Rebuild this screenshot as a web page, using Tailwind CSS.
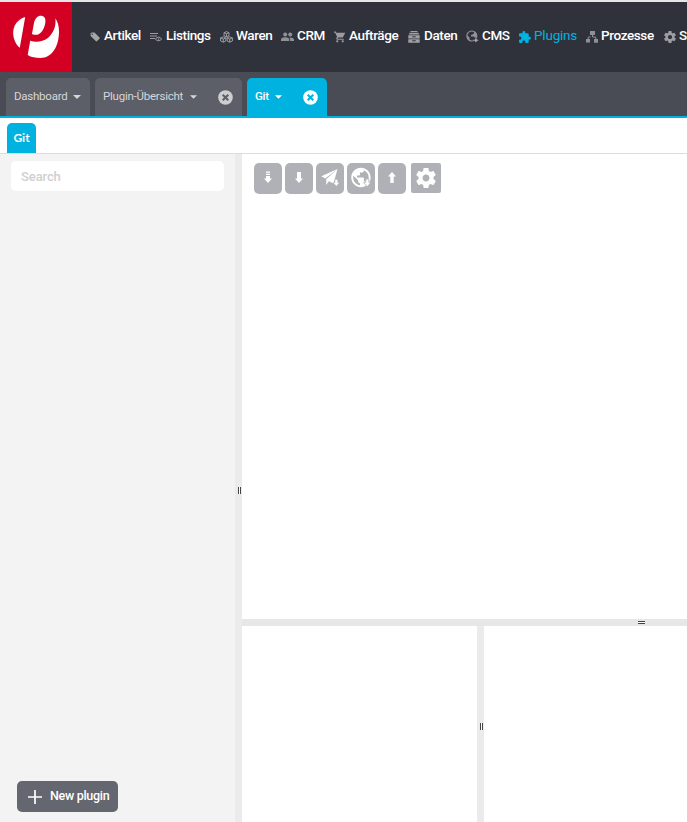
<!DOCTYPE html>
<html lang="de">
<head>
<meta charset="utf-8">
<title>Git</title>
<script src="https://cdn.jsdelivr.net/npm/@tailwindcss/browser@4"></script>
</head>
<body class="w-[687px] h-[822px] overflow-hidden bg-white font-['Roboto',sans-serif] flex flex-col">
<header class="h-[72px] shrink-0 border-t-2 border-[#e6e6e6] bg-[#30323b] flex overflow-hidden">
  <div class="w-[72px] h-[70px] shrink-0 bg-[#d40023]">
    <svg class="w-[72px] h-[70px]" viewBox="0 2 72 70" fill="#fff">
      <path d="M25.200 17C17.500 19.500 13.200 25.500 13.200 32.500C13.200 39 15.700 44.500 19.800 47.800Z"/>
      <path d="M32 33.700L34 23C35 18.500 37.500 15.800 41 15.800C45 15.800 46.300 19.500 45 24.500C43.500 30.500 40 35.500 35 34.800C33.500 34.600 32.400 34.300 32 33.700Z"/>
      <path d="M55.300 18.300C57.700 21.500 59 26 59 31.500C59 47 51.500 58 40.500 58C35.500 58 31 57.200 27.700 55L30.200 40.800C36 42.500 42.500 42 47.800 38C53.300 33.500 56.500 26 55.300 18.300Z"/>
    </svg>
  </div>
  <nav class="flex items-center h-[67px] pl-[18px] text-[13.5px] font-medium tracking-[-0.38px] text-white whitespace-nowrap">
    <a class="flex items-center w-[60px] shrink-0"><svg class="w-[10px] h-3 mr-1 mt-0.5" viewBox="0 0 10 12" fill="#a5a6aa"><path fill-rule="evenodd" d="M.5 2.500L1.500 1.500H4.500L9.700 6.700Q10 7.100 9.700 7.500L6.800 10.300Q6.400 10.600 6 10.300L.7 5ZM2.200 2.600A.7.7 0 1 0 2.200 4A.7.700 0 1 0 2.200 2.600Z"/></svg>Artikel</a>
    <a class="flex items-center w-[70px] shrink-0"><svg class="w-3 h-3 mr-1 mt-0.5" viewBox="0 0 12 12" fill="none" stroke="#9b9ca1"><path d="M0 2.500H8M0 5H7M0 7.500H5" stroke-width="1.200"/><path d="M5.300 8Q8.500 4.300 11.700 8Q8.500 11.500 5.300 8Z"/><circle cx="8.500" cy="8" r=".8" fill="#9b9ca1" stroke="none"/></svg>Listings</a>
    <a class="flex items-center w-[61px] shrink-0"><svg class="w-[13px] h-3 mr-[3px] mt-0.5" viewBox="0 0 13 12" fill="none" stroke="#a4a5aa" stroke-width=".9"><path d="M6.500.6L9 1.700V4.700L6.500 5.800L4 4.700V1.700ZM4 1.700L6.500 2.800L9 1.700M6.500 2.800V5.800M3.300 5.800L5.800 6.900V10L3.300 11.200L.6 10V6.900ZM.6 6.900L3.300 8.100L5.800 6.900M3.300 8.100V11.200M9.700 5.800L12.400 6.900V10L9.700 11.200L7.200 10V6.900ZM7.200 6.900L9.700 8.100L12.400 6.900M9.700 8.100V11.200"/></svg>Waren</a>
    <a class="flex items-center w-[53px] shrink-0"><svg class="w-[13px] h-3 mr-[3px] mt-0.5" viewBox="0 0 13 12" fill="#909197"><circle cx="4.200" cy="3.500" r="2"/><circle cx="9.200" cy="3.500" r="2"/><path d="M0 10V8.500Q.4 6.300 4.200 6.300Q8 6.300 8.200 8.500V10ZM9.100 10V8.500Q9 7.300 8.300 6.400Q12.700 6.300 13 8.500V10Z"/></svg>CRM</a>
    <a class="flex items-center w-[74px] shrink-0"><svg class="w-3 h-3 mr-[3px] mt-0.5" viewBox="1 1 22 22" fill="#9b9ca1"><path d="M7 18c-1.100 0-1.990.9-1.990 2S5.900 22 7 22s2-.9 2-2-.9-2-2-2zM1 2v2h2l3.600 7.590-1.350 2.450C4.520 15.370 5.480 17 7 17h12v-2H7.420l.93-2h7.450c.75 0 1.410-.41 1.750-1.030L21.700 4H5.210L4.270 2H1zm16 16c-1.100 0-1.990.9-1.990 2s.89 2 1.990 2 2-.9 2-2-.9-2-2-2z"/></svg>Aufträge</a>
    <a class="flex items-center w-[58px] shrink-0"><svg class="w-3 h-3 mr-1 mt-0.5" viewBox="0 0 12 12" fill="#a0a1a6"><path fill-rule="evenodd" d="M2.500 0H9.500V1H2.500ZM1.700 1.700H10.300L11.300 3.400H.7ZM.3 4.200H11.700V7.400H.3ZM4.300 5.200V6.200H7.700V5.200ZM.3 8.200H11.700V11.700H.3ZM4.300 9.200V10.200H7.700V9.200Z"/></svg>Daten</a>
    <a class="flex items-center w-[53px] shrink-0"><svg class="w-[13px] h-[13px] mr-[3px] mt-0.5" viewBox="0 0 13 13"><circle cx="5.800" cy="6" r="5" fill="none" stroke="#94959b" stroke-width="1.100"/><path d="M1 5L3.500 7.500V9.500L5.500 11Q1 10.500 1 5ZM4.500 1.500H8V3.500L6.500 4.500L5 5V6.500H8L9 8L10.500 7V4.500L8.500 1.700Z" fill="#94959b"/><path d="M6.500 9.700H9V7.800L12.700 10.300L9 12.800V11H6.500Z" fill="#aaabb0" stroke="#30323b" stroke-width=".4"/></svg>CMS</a>
    <a class="flex items-center w-[67px] shrink-0 text-[#00b2df] font-normal tracking-[-0.2px]"><svg class="w-3 h-3 mr-[3px] mt-0.5" viewBox="2 1 21 21" fill="#00b2df"><path d="M20.500 11H19V7c0-1.100-.9-2-2-2h-4V3.500C13 2.120 11.880 1 10.500 1S8 2.120 8 3.500V5H4c-1.100 0-1.990.9-1.990 2v3.800H3.500c1.490 0 2.700 1.210 2.700 2.700s-1.210 2.700-2.700 2.700H2V20c0 1.100.9 2 2 2h3.800v-1.500c0-1.490 1.210-2.700 2.700-2.700 1.490 0 2.700 1.210 2.700 2.700V22H17c1.100 0 2-.9 2-2v-4h1.500c1.380 0 2.500-1.120 2.500-2.500S21.880 11 20.500 11z"/></svg>Plugins</a>
    <a class="flex items-center w-[78px] shrink-0"><svg class="w-3 h-3 mr-[3px] mt-0.5" viewBox="0 0 12 12" fill="#8e9096"><path d="M4 0H9V4H4ZM0 8H4V11.500H0ZM8 8H12V11.700H8Z"/><path d="M6.500 3.500V6H9.700V8.500M4.500 6H2.200V8.500" fill="none" stroke="#8e9096"/></svg>Prozesse</a>
    <a class="flex items-center shrink-0"><svg class="w-3 h-3 mr-[3px] mt-0.5" viewBox="2 2 20 20" fill="#9d9ea3"><path d="M19.430 12.980c.04-.32.07-.64.07-.98s-.03-.66-.07-.98l2.110-1.650c.19-.15.24-.42.12-.64l-2-3.460c-.12-.22-.39-.3-.61-.22l-2.490 1c-.52-.4-1.080-.73-1.690-.98l-.38-2.650C14.460 2.180 14.250 2 14 2h-4c-.25 0-.46.18-.49.42l-.38 2.650c-.61.25-1.170.59-1.690.98l-2.490-1c-.23-.09-.49 0-.61.22l-2 3.460c-.13.22-.07.49.12.64l2.110 1.650c-.04.32-.07.65-.07.98s.03.66.07.98l-2.110 1.650c-.19.15-.24.42-.12.64l2 3.460c.12.22.39.3.61.22l2.490-1c.52.4 1.080.73 1.690.98l.38 2.650c.03.24.24.42.49.42h4c.25 0 .46-.18.49-.42l.38-2.650c.61-.25 1.170-.59 1.690-.98l2.490 1c.23.09.49 0 .61-.22l2-3.460c.12-.22.07-.49-.12-.64l-2.110-1.650zM12 15.500c-1.930 0-3.500-1.570-3.500-3.500s1.570-3.500 3.500-3.500 3.500 1.570 3.500 3.500-1.570 3.500-3.500 3.500z"/></svg>S</a>
  </nav>
</header>

<div class="h-[46px] shrink-0 bg-[#4a4c55] border-b-2 border-[#00b2df] flex items-end pl-1.5 gap-[5px] text-[11.5px] tracking-[-0.24px] text-[#d6d7d9] whitespace-nowrap">
  <div class="w-[84px] h-[38px] rounded-t-[5px] bg-[#5c5e68] flex items-center pl-2">
    <span class="w-[59px]">Dashboard</span><svg class="w-2 h-1" viewBox="0 0 8 4" fill="#d6d7d9"><path d="M0 0H8L4 4Z"/></svg>
  </div>
  <div class="w-[147px] h-[38px] rounded-t-[5px] bg-[#5c5e68] flex items-center pl-2">
    <span class="w-[87px]">Plugin-Übersicht</span><svg class="w-[7px] h-1" viewBox="0 0 8 4" fill="#d6d7d9"><path d="M0 0H8L4 4Z"/></svg>
    <svg class="w-[15px] h-[15px] ml-[21px]" viewBox="0 0 14 14"><circle cx="7" cy="7" r="6.800" fill="#cdced0"/><path d="M4.400 4.400L9.600 9.600M9.600 4.400L4.400 9.600" stroke="#5c5e68" stroke-width="1.900"/></svg>
  </div>
  <div class="w-20 h-[38px] rounded-t-[5px] bg-[#00b2df] text-white font-medium flex items-center pl-2">
    <span class="w-5">Git</span><svg class="w-[7px] h-1" viewBox="0 0 8 4" fill="#fff"><path d="M0 0H8L4 4Z"/></svg>
    <svg class="w-[15px] h-[15px] ml-[21px]" viewBox="0 0 14 14"><circle cx="7" cy="7" r="6.800" fill="#fff"/><path d="M4.400 4.400L9.600 9.600M9.600 4.400L4.400 9.600" stroke="#00b2df" stroke-width="1.900"/></svg>
  </div>
</div>

<div class="h-9 shrink-0 border-b border-[#dcdcdc] flex items-end pl-[7px]">
  <div class="w-[29px] h-[30px] rounded-t-[5px] bg-[#00b2df] text-white text-xs font-bold font-['Lato',sans-serif] flex items-center justify-center">Git</div>
</div>

<main class="flex-1 min-h-0 flex">
  <aside class="w-[235px] shrink-0 bg-[#f3f3f3] flex flex-col justify-between pt-[7px] pb-[10px]">
    <input class="ml-[11px] w-[213px] h-[30px] rounded-[5px] bg-white px-[10px] text-[13px] font-medium tracking-[-0.1px] placeholder:text-[#cfcfcf] placeholder:opacity-100" placeholder="Search">
    <button class="ml-[17px] w-[101px] h-[31px] rounded-[5px] bg-[#646670] text-white text-[12.5px] font-medium flex items-center pl-[11px] whitespace-nowrap tracking-[-0.3px]">
      <svg class="w-[14px] h-[14px] mr-2" viewBox="0 0 14 14" stroke="#fff" stroke-width="1.700"><path d="M7 0V14M0 7H14"/></svg>New plugin
    </button>
  </aside>
  <div class="w-[7px] shrink-0 bg-[#ebebeb] pl-[3px] pt-[333px]"><svg class="block w-[3px] h-[7px]" viewBox="0 0 3 7"><path d="M0 0H3V7H0Z" fill="#fff"/><path d="M0 0H1V7H0ZM2 0H3V7H2Z" fill="#444"/></svg></div>
  <section class="flex-1 min-w-0 flex flex-col">
    <div class="h-[465px] shrink-0 pl-3 pt-[9px] flex items-start gap-[3px]">
      <button class="w-7 h-[31px] rounded-[5px] bg-[#b0b1b7]"><svg class="w-7 h-[31px]" viewBox="0 0 28 31" fill="#fff"><path d="M12 8.500H16V9.700H12ZM12 10.700H16V12H12ZM12 13H16V15.500H18L14 20L10 15.500H12Z"/></svg></button>
      <button class="w-7 h-[31px] rounded-[5px] bg-[#b0b1b7]"><svg class="w-7 h-[31px]" viewBox="0 0 28 31" fill="#fff"><path d="M12 9H16V15.500H18L14 20L10 15.500H12Z"/></svg></button>
      <button class="w-7 h-[31px] rounded-[5px] bg-[#b0b1b7]"><svg class="w-7 h-[31px]" viewBox="0 0 28 31" fill="#fff"><path d="M21.500 6L5.300 13.300L9.300 15.500ZM21.500 6L10.200 16.200V22L12.800 18.200L17.500 20.500Z"/><path d="M19 16.500H21.700V19.500H23.500L20.300 23.300L17.100 19.500H19Z" stroke="#b0b1b7" stroke-width=".5"/></svg></button>
      <button class="w-7 h-[31px] rounded-[5px] bg-[#b0b1b7]"><svg class="w-7 h-[31px]" viewBox="0 0 28 31"><g transform="translate(2.300 2.800) scale(.97)"><path fill="#fff" d="M12 2C6.480 2 2 6.480 2 12s4.480 10 10 10 10-4.480 10-10S17.520 2 12 2zm-1 17.930c-3.950-.49-7-3.850-7-7.930 0-.62.08-1.210.21-1.790L9 15v1c0 1.100.9 2 2 2v1.930zm6.900-2.540c-.26-.81-1-1.390-1.900-1.390h-1v-3c0-.55-.45-1-1-1H8v-2h2c.55 0 1-.45 1-1V7h2c1.100 0 2-.9 2-2v-.41c2.930 1.190 5 4.060 5 7.410 0 2.080-.8 3.970-2.100 5.390z"/></g><path d="M18.800 16H21.800V19.300H24L20.300 23.800L16.600 19.300H18.800Z" fill="#fff" stroke="#b0b1b7" stroke-width=".8"/></svg></button>
      <button class="w-7 h-[31px] rounded-[5px] bg-[#b0b1b7]"><svg class="w-7 h-[31px]" viewBox="0 0 28 31" fill="#fff"><path d="M14 9L18 13.500H15.700V20H12.300V13.500H10Z"/></svg></button>
      <button class="ml-0.5 w-[30px] h-[30px] rounded-[2px] bg-[#b0b1b7] flex items-center justify-center"><svg class="w-6 h-6" viewBox="0 0 24 24" fill="#fff"><path d="M19.430 12.980c.04-.32.07-.64.07-.98s-.03-.66-.07-.98l2.110-1.650c.19-.15.24-.42.12-.64l-2-3.460c-.12-.22-.39-.3-.61-.22l-2.490 1c-.52-.4-1.080-.73-1.690-.98l-.38-2.650C14.460 2.180 14.250 2 14 2h-4c-.25 0-.46.18-.49.42l-.38 2.650c-.61.25-1.170.59-1.690.98l-2.490-1c-.23-.09-.49 0-.61.22l-2 3.460c-.13.22-.07.49.12.64l2.110 1.650c-.04.32-.07.65-.07.98s.03.66.07.98l-2.110 1.650c-.19.15-.24.42-.12.64l2 3.460c.12.22.39.3.61.22l2.490-1c.52.4 1.080.73 1.690.98l.38 2.650c.03.24.24.42.49.42h4c.25 0 .46-.18.49-.42l.38-2.650c.61-.25 1.170-.59 1.690-.98l2.490 1c.23.09.49 0 .61-.22l2-3.460c.12-.22.07-.49-.12-.64l-2.110-1.650zM12 15.500c-1.930 0-3.500-1.570-3.500-3.500s1.570-3.500 3.500-3.500 3.500 1.570 3.500 3.500-1.570 3.500-3.500 3.500z"/></svg></button>
    </div>
    <div class="h-[7px] shrink-0 bg-[#e7e7e7] flex items-center pl-[396px]"><svg class="w-[7px] h-[3px]" viewBox="0 0 7 3"><path d="M0 0H7V3H0Z" fill="#fff"/><path d="M0 0H7V1H0ZM0 2H7V3H0Z" fill="#444"/></svg></div>
    <div class="flex-1 flex">
      <div class="w-[235px] shrink-0 bg-white"></div>
      <div class="w-[7px] shrink-0 bg-[#ebebeb] pl-[3px] pt-[97px]"><svg class="block w-[3px] h-[7px]" viewBox="0 0 3 7"><path d="M0 0H3V7H0Z" fill="#fff"/><path d="M0 0H1V7H0ZM2 0H3V7H2Z" fill="#444"/></svg></div>
      <div class="flex-1 bg-white"></div>
    </div>
  </section>
</main>
</body>
</html>
